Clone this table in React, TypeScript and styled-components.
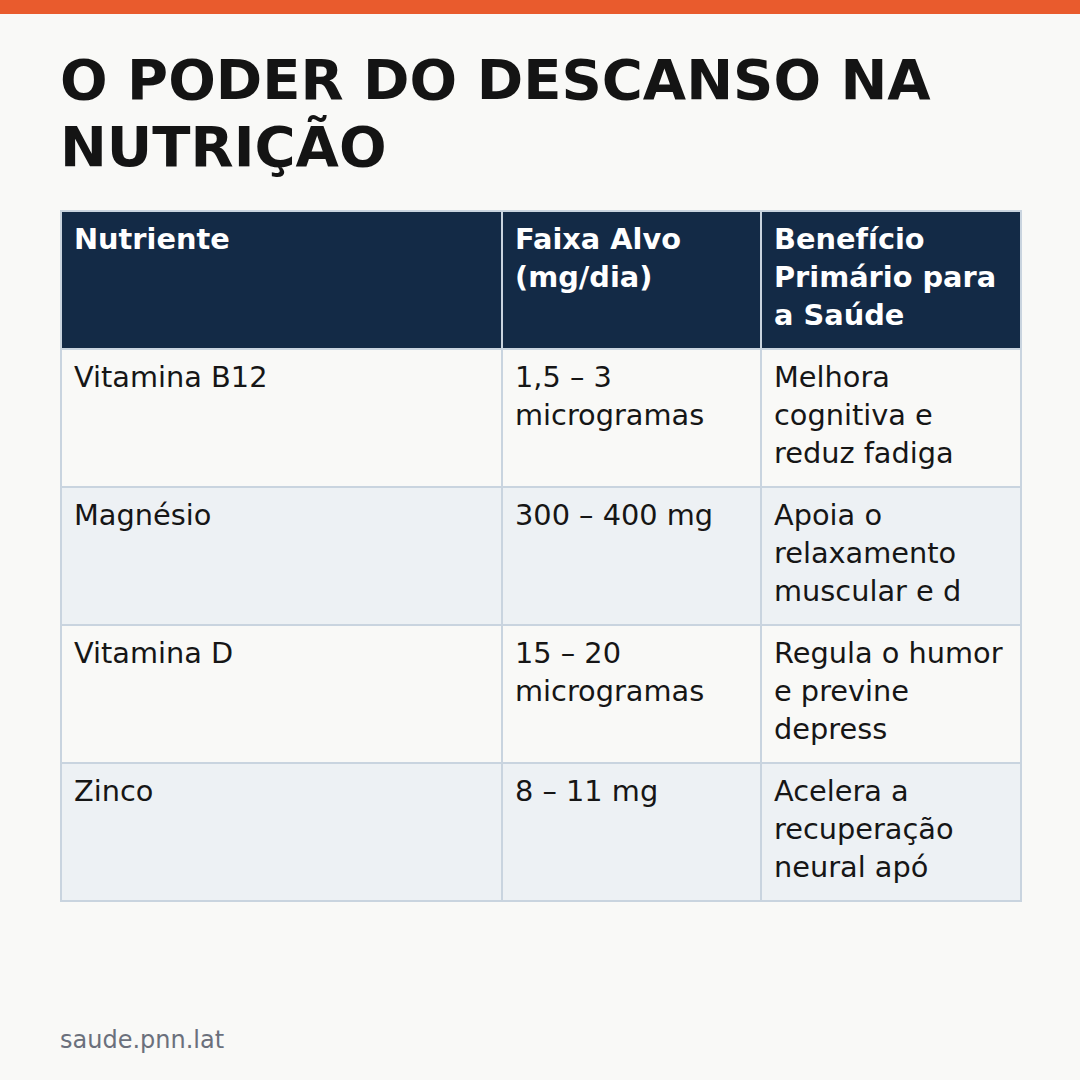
import React from "react";
import styled, { createGlobalStyle } from "styled-components";

const GlobalStyle = createGlobalStyle`
  html, body {
    margin: 0;
    padding: 0;
    background: #f9f9f7;
  }
  * { box-sizing: border-box; }
`;

const Page = styled.div`
  width: 1080px;
  height: 1080px;
  display: flex;
  flex-direction: column;
  background: #f9f9f7;
  font-family: "DejaVu Sans", "Liberation Sans", sans-serif;
  color: #161616;
  overflow: hidden;
`;

const TopBar = styled.div`
  height: 14px;
  flex: none;
  background: #e95b2d;
`;

const Content = styled.main`
  flex: 1;
  display: flex;
  flex-direction: column;
  padding: 32px 60px 25px 60px;
`;

const Title = styled.h1`
  margin: 0 0 30px 0;
  font-size: 56px;
  line-height: 1.2;
  font-weight: 700;
  color: #141414;
  letter-spacing: 0;
`;

const Table = styled.table`
  width: 960px;
  border-collapse: collapse;
  table-layout: fixed;
  border: 2px solid #c9d4df;
`;

const HeadCell = styled.th`
  background: #132a46;
  color: #ffffff;
  font-weight: 700;
  font-size: 28.8px;
  line-height: 37.8px;
  text-align: left;
  vertical-align: top;
  padding: 9px 12px 0 12px;
  height: 138px;
  border: 2px solid #c9d4df;
  border-top: none;
`;

const Row = styled.tr<{ $alt?: boolean }>`
  background: ${(p) => (p.$alt ? "#edf1f4" : "#f9f9f7")};
`;

const Cell = styled.td`
  font-size: 28.8px;
  line-height: 37.8px;
  color: #161616;
  vertical-align: top;
  padding: 9px 12px 0 12px;
  height: 138px;
  border: 2px solid #c9d4df;
`;

const Footer = styled.div`
  margin-top: auto;
  font-size: 24px;
  line-height: 29px;
  color: #6b707c;
`;

const rows = [
  ["Vitamina B12", "1,5 – 3 microgramas", "Melhora cognitiva e reduz fadiga"],
  ["Magnésio", "300 – 400 mg", "Apoia o relaxamento muscular e d"],
  ["Vitamina D", "15 – 20 microgramas", "Regula o humor e previne depress"],
  ["Zinco", "8 – 11 mg", "Acelera a recuperação neural apó"],
];

export default function App() {
  return (
    <>
      <GlobalStyle />
      <Page>
        <TopBar />
        <Content>
          <Title>O PODER DO DESCANSO NA NUTRIÇÃO</Title>
          <Table>
            <colgroup>
              <col style={{ width: 441 }} />
              <col style={{ width: 259 }} />
              <col style={{ width: 260 }} />
            </colgroup>
            <thead>
              <tr>
                <HeadCell>Nutriente</HeadCell>
                <HeadCell>Faixa Alvo (mg/dia)</HeadCell>
                <HeadCell>Benefício Primário para a Saúde</HeadCell>
              </tr>
            </thead>
            <tbody>
              {rows.map((r, i) => (
                <Row key={r[0]} $alt={i % 2 === 1}>
                  {r.map((c) => (
                    <Cell key={c}>{c}</Cell>
                  ))}
                </Row>
              ))}
            </tbody>
          </Table>
          <Footer>saude.pnn.lat</Footer>
        </Content>
      </Page>
    </>
  );
}
